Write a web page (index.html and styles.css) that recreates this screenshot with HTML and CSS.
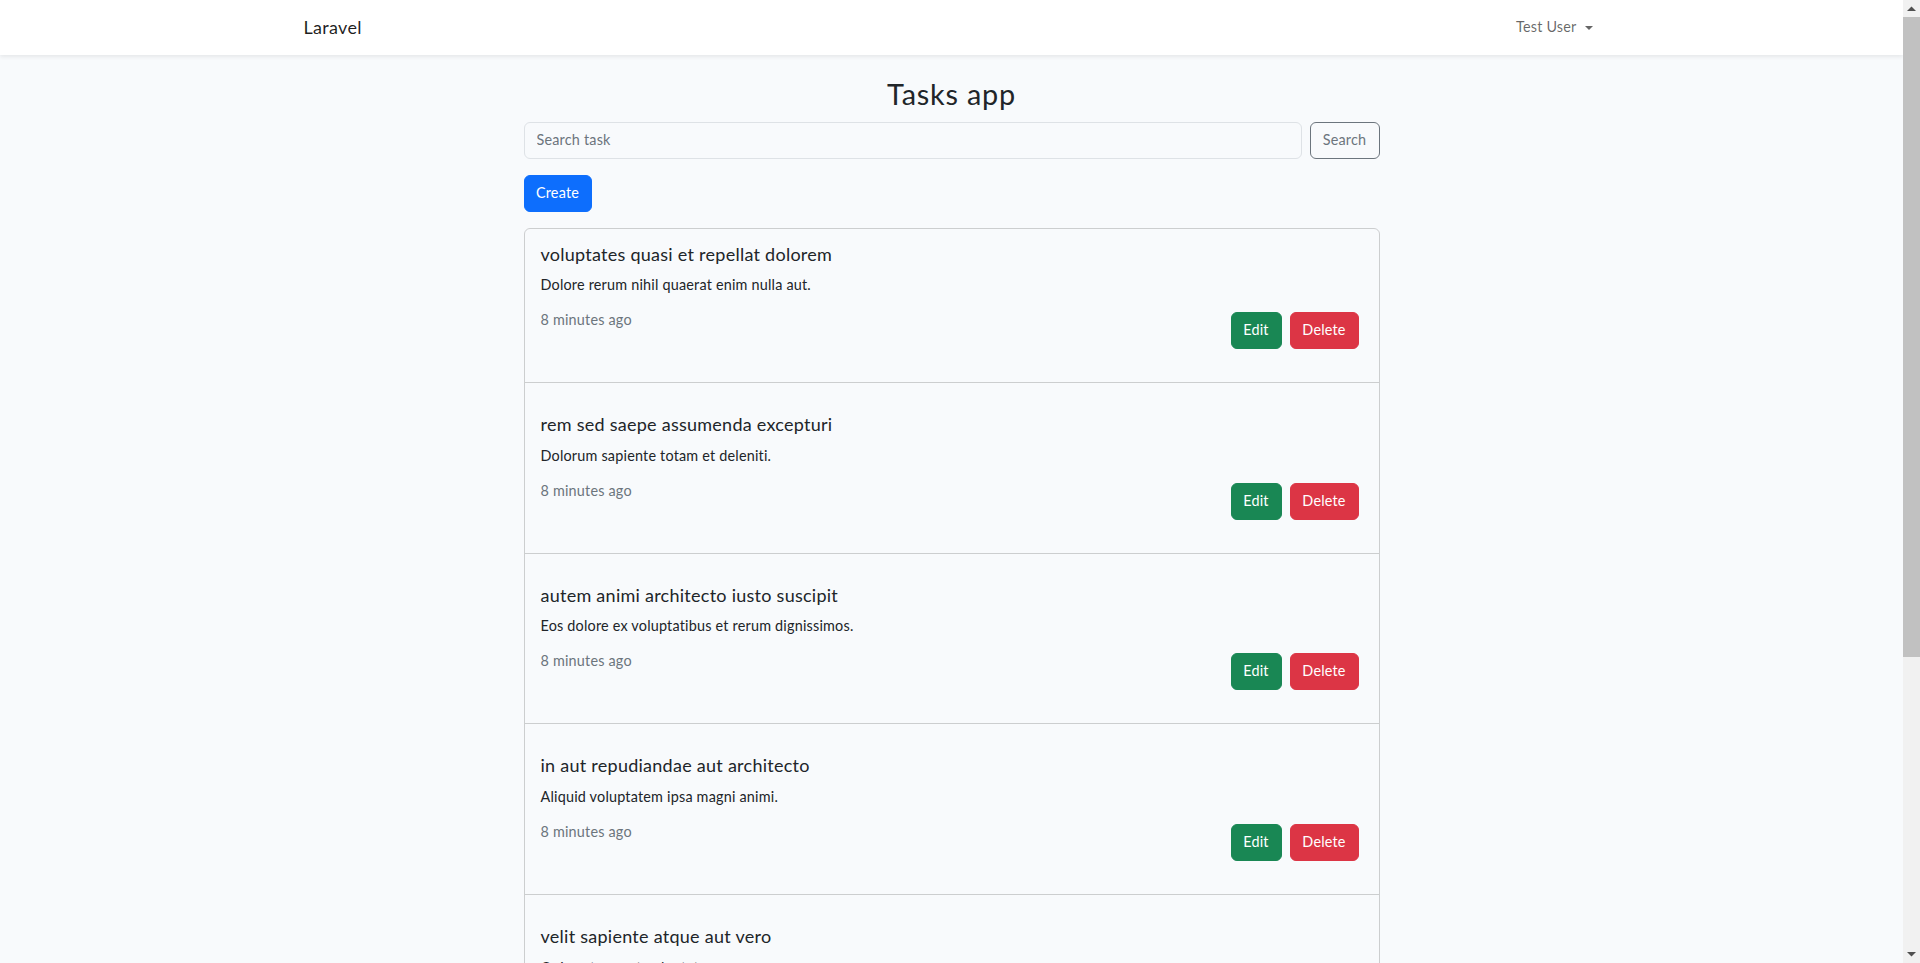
FILE: index.html
```html
<!DOCTYPE html>
<html lang="en">
<head>
<meta charset="utf-8">
<title>Laravel</title>
<link rel="stylesheet" href="styles.css">
</head>
<body>
<div class="page">
  <nav class="navbar">
    <div class="container nav-inner">
      <a class="brand" href="#">Laravel</a>
      <a class="user" href="#">Test User<span class="caret"></span></a>
    </div>
  </nav>
  <main class="main">
    <div class="container">
      <div class="col">
        <h2 class="page-title">Tasks app</h2>
        <form class="search">
          <input class="search-input" type="text" placeholder="Search task">
          <button class="btn btn-outline btn-search" type="button">Search</button>
        </form>
        <a class="btn btn-primary btn-create" href="#">Create</a>
        <div class="task-list">
          <div class="task">
            <h5 class="task-title">voluptates quasi et repellat dolorem</h5>
            <p class="task-desc">Dolore rerum nihil quaerat enim nulla aut.</p>
            <div class="task-foot">
              <span class="task-time">8 minutes ago</span>
              <div class="actions"><a class="btn btn-success btn-edit" href="#">Edit</a><button class="btn btn-danger btn-delete" type="button">Delete</button></div>
            </div>
          </div>
          <div class="task">
            <h5 class="task-title">rem sed saepe assumenda excepturi</h5>
            <p class="task-desc">Dolorum sapiente totam et deleniti.</p>
            <div class="task-foot">
              <span class="task-time">8 minutes ago</span>
              <div class="actions"><a class="btn btn-success btn-edit" href="#">Edit</a><button class="btn btn-danger btn-delete" type="button">Delete</button></div>
            </div>
          </div>
          <div class="task">
            <h5 class="task-title">autem animi architecto iusto suscipit</h5>
            <p class="task-desc">Eos dolore ex voluptatibus et rerum dignissimos.</p>
            <div class="task-foot">
              <span class="task-time">8 minutes ago</span>
              <div class="actions"><a class="btn btn-success btn-edit" href="#">Edit</a><button class="btn btn-danger btn-delete" type="button">Delete</button></div>
            </div>
          </div>
          <div class="task">
            <h5 class="task-title">in aut repudiandae aut architecto</h5>
            <p class="task-desc">Aliquid voluptatem ipsa magni animi.</p>
            <div class="task-foot">
              <span class="task-time">8 minutes ago</span>
              <div class="actions"><a class="btn btn-success btn-edit" href="#">Edit</a><button class="btn btn-danger btn-delete" type="button">Delete</button></div>
            </div>
          </div>
          <div class="task">
            <h5 class="task-title">velit sapiente atque aut vero</h5>
            <p class="task-desc">Quis aut rem ut voluptatem.</p>
          </div>
        </div>
      </div>
    </div>
  </main>
</div>
<div class="scrollbar">
  <div class="sb-arrow"><svg width="9" height="5" viewBox="0 0 9 5"><path d="M0 5 L4.5 0.5 L9 5 Z" fill="#505050"/></svg></div>
  <div class="sb-track"><div class="sb-thumb"></div></div>
  <div class="sb-arrow"><svg width="9" height="5" viewBox="0 0 9 5"><path d="M0 0 L4.5 4.5 L9 0 Z" fill="#505050"/></svg></div>
</div>
</body>
</html>
```
FILE: styles.css
```css
* { box-sizing: border-box; }

html, body {
  margin: 0;
  padding: 0;
}

body {
  display: flex;
  height: 100vh;
  overflow: hidden;
  background: #f8fafc;
  color: #212529;
  font-family: "Lato", "Noto Sans", sans-serif;
  font-size: 14.4px;
  line-height: 1.6;
  letter-spacing: 0.2px;
}

a { text-decoration: none; }

.page {
  flex: 1;
  min-width: 0;
  height: 100vh;
  overflow: hidden;
}

.container {
  width: 1320px;
  margin: 0 auto;
  padding: 0 12px;
}

/* navbar */
.navbar {
  background: #fff;
  box-shadow: 0 2px 4px rgba(0, 0, 0, 0.075);
  padding: 8px 0;
  position: relative;
}

.nav-inner {
  display: flex;
  align-items: center;
  justify-content: space-between;
}

.brand {
  color: rgba(0, 0, 0, 0.88);
  font-size: 18px;
  line-height: 28px;
  padding: 4px 0 6px;
  letter-spacing: 0.3px;
}

.user {
  color: rgba(0, 0, 0, 0.6);
  font-size: 14.4px;
  line-height: 23.04px;
  padding: 7px 7px 9px 8px;
  display: flex;
  align-items: center;
}

.caret {
  display: inline-block;
  margin-left: 8px;
  width: 0;
  height: 0;
  border-top: 4.5px solid rgba(0, 0, 0, 0.6);
  border-left: 4.3px solid transparent;
  border-right: 4.3px solid transparent;
  margin-top: 2px;
}

/* main */
.main {
  padding: 24px 0 40px;
}

.col {
  width: 856px;
  margin: 0 auto;
}

.page-title {
  margin: -2px 0 10px;
  font-size: 28.8px;
  font-weight: 400;
  line-height: 34.56px;
  text-align: center;
  letter-spacing: 0.8px;
}

.search {
  display: flex;
  gap: 8px;
  margin: 0 0 16px;
}

.search-input {
  flex: 1;
  height: 37px;
  padding: 5px 12px 7px;
  font: inherit;
  letter-spacing: 0.2px;
  line-height: 23px;
  color: #212529;
  background: #f8fafc;
  border: 1px solid #dee2e6;
  border-radius: 6px;
  outline: none;
}

.search-input::placeholder { color: #6c757d; }

.btn {
  display: inline-flex;
  align-items: center;
  justify-content: center;
  height: 37px;
  padding: 0 0 2px;
  font: inherit;
  letter-spacing: 0.2px;
  line-height: 23px;
  border: 1px solid transparent;
  border-radius: 6px;
  cursor: pointer;
}

.btn-outline {
  color: #6c757d;
  border-color: #6c757d;
  background: transparent;
}

.btn-search { width: 70px; }

.btn-primary {
  background: #0d6efd;
  border-color: #0d6efd;
  color: #fff;
}

.btn-create {
  width: 68px;
  margin: 0 0 16px;
}

.btn-success {
  background: #198754;
  border-color: #198754;
  color: #fff;
}

.btn-danger {
  background: #dc3545;
  border-color: #dc3545;
  color: #fff;
}

.btn-edit { width: 51px; }
.btn-delete { width: 69px; }

/* task list */
.task-list {
  border: 1px solid rgba(0, 0, 0, 0.175);
  border-radius: 6px;
}

.task {
  padding: 31px 20px 16px 16px;
  border-top: 1px solid rgba(0, 0, 0, 0.175);
}

.task:first-child {
  border-top: 0;
  padding-top: 15px;
}

.task-title {
  margin: 0 0 8px;
  font-size: 18px;
  font-weight: 400;
  line-height: 21.6px;
  letter-spacing: 0.26px;
}

.task-desc {
  margin: 0 0 16px;
  line-height: 23px;
}

.task-foot {
  display: flex;
  justify-content: space-between;
  align-items: flex-start;
  margin-bottom: 17px;
}

.task-time {
  color: #6c757d;
  line-height: 23px;
  margin-top: -4px;
}

.actions {
  display: flex;
  gap: 8px;
}

/* scrollbar */
.scrollbar {
  flex: none;
  width: 17px;
  height: 100vh;
  display: flex;
  flex-direction: column;
  background: #f1f1f1;
}

.sb-arrow {
  height: 17px;
  flex: none;
  display: flex;
  align-items: center;
  justify-content: center;
}

.sb-track {
  flex: 1;
}

.sb-thumb {
  height: 640px;
  background: #c1c1c1;
}
```
